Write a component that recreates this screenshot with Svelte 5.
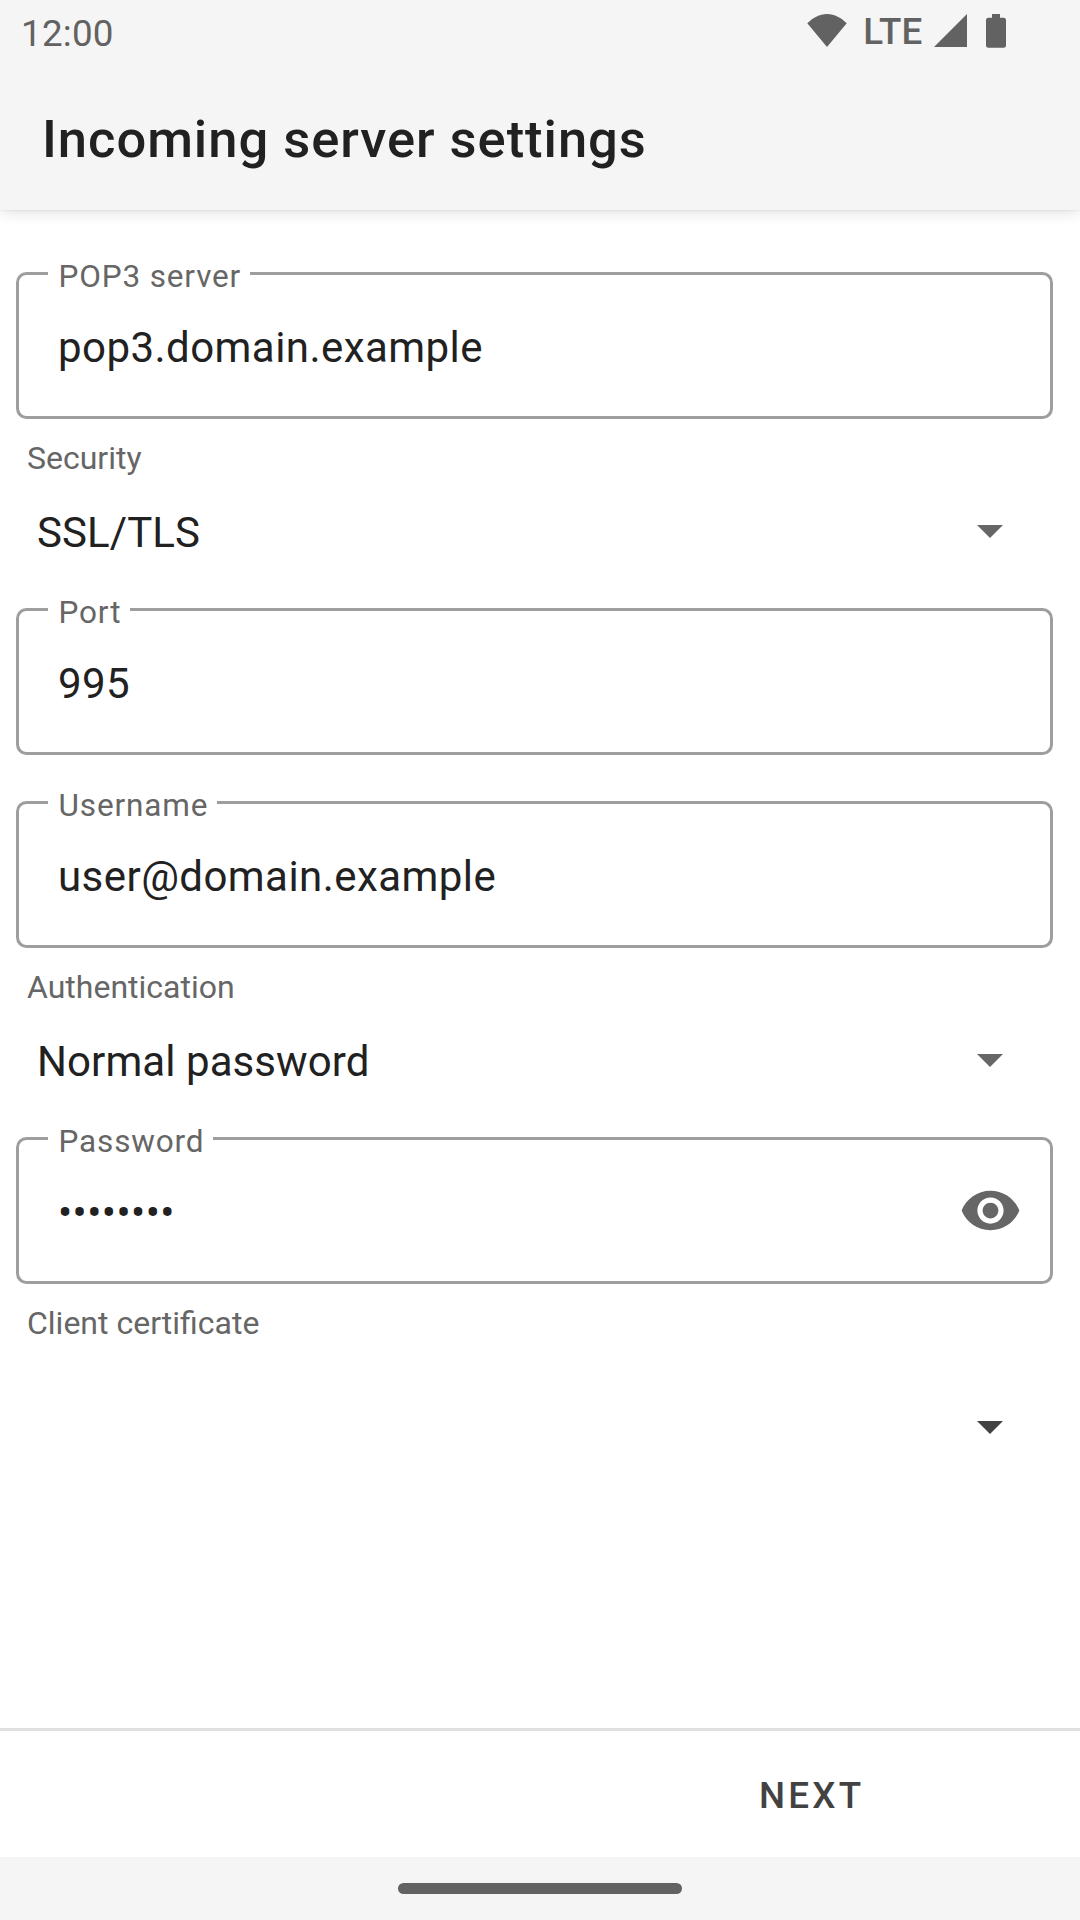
<script>
  const bullets = '•'.repeat(8);
</script>

{#snippet field(label, value, secret)}
  <fieldset class="field">
    <legend><span>{label}</span></legend>
    <div class="field-row">
      <span class="value">{value}</span>
      {#if secret}
        <svg class="eye" viewBox="0 0 24 24" aria-hidden="true">
          <path d="M12 4.5C7 4.5 2.73 7.61 1 12c1.73 4.39 6 7.5 11 7.5s9.27-3.11 11-7.5c-1.73-4.39-6-7.5-11-7.5zM12 17c-2.76 0-5-2.24-5-5s2.24-5 5-5 5 2.24 5 5-2.24 5-5 5zm0-8c-1.66 0-3 1.34-3 3s1.34 3 3 3 3-1.34 3-3-1.34-3-3-3z" />
        </svg>
      {/if}
    </div>
  </fieldset>
{/snippet}

{#snippet spinner(label, value, kind)}
  <div class="spinner {kind}">
    <div class="caption">{label}</div>
    <div class="choice">
      <span>{value}</span>
      <svg class="arrow" viewBox="0 0 26 13" aria-hidden="true"><path d="M0 0h26l-13 13z" /></svg>
    </div>
  </div>
{/snippet}

<div class="screen">
  <header>
    <div class="status">
      <span class="clock">12:00</span>
      <div class="indicators">
        <svg class="wifi" viewBox="0 0 40 33" aria-hidden="true"><path d="M20 33L.3 9.3C5.5 4 12.500 0 20 0s14.500 4 19.700 9.300z" /></svg>
        <span class="lte">LTE</span>
        <svg class="signal" viewBox="0 0 33 33" aria-hidden="true"><path d="M33 0v33H0z" /></svg>
        <svg class="battery" viewBox="0 0 20 34" aria-hidden="true"><path d="M6 0h8v3.700h3.500a2.500 2.500 0 0 1 2.500 2.500v25a2.500 2.500 0 0 1-2.500 2.500h-15a2.500 2.500 0 0 1-2.500-2.500v-25a2.500 2.500 0 0 1 2.500-2.500H6z" /></svg>
      </div>
    </div>
    <h1>Incoming server settings</h1>
  </header>

  <main>
    {@render field('POP3 server', 'pop3.domain.example', false)}
    {@render spinner('Security', 'SSL/TLS', '')}
    {@render field('Port', '995', false)}
    <div class="space"></div>
    {@render field('Username', 'user@domain.example', false)}
    {@render spinner('Authentication', 'Normal password', '')}
    {@render field('Password', bullets, true)}
    {@render spinner('Client certificate', '', 'certificate')}
  </main>

  <footer>
    <button>NEXT</button>
  </footer>
  <nav><div class="pill"></div></nav>
</div>

<style>
  :global(body) {
    margin: 0;
    background: #fff;
  }
  .screen {
    box-sizing: border-box;
    width: 1080px;
    height: 1920px;
    display: flex;
    flex-direction: column;
    overflow: hidden;
    background: #fff;
    font-family: Roboto, sans-serif;
    color: #212121;
  }
  svg {
    display: block;
    flex: none;
    fill: #666;
  }
  header {
    flex: none;
    height: 210px;
    background: #f5f5f5;
    box-shadow: 0 4px 14px -2px rgba(0, 0, 0, 0.13), 0 1px 2px rgba(0, 0, 0, 0.06);
  }
  .status {
    height: 63px;
    display: flex;
    justify-content: space-between;
    padding: 0 74px 0 21px;
    color: #626262;
    font-size: 36.75px;
    line-height: 44px;
  }
  .status svg {
    fill: #626262;
  }
  .clock {
    padding-top: 12px;
    letter-spacing: 0.25px;
  }
  .indicators {
    display: flex;
    align-items: flex-start;
  }
  .wifi {
    width: 40px;
    height: 33px;
    margin-top: 14px;
  }
  .lte {
    margin: 10px 11.5px 0 16px;
    font-weight: 500;
    letter-spacing: 0.2px;
  }
  .signal {
    width: 33px;
    height: 33px;
    margin-top: 14px;
  }
  .battery {
    width: 20px;
    height: 34px;
    margin: 14px 0 0 19px;
  }
  h1 {
    margin: 0;
    padding: 45px 42px 0;
    font-size: 52.5px;
    font-weight: 500;
    line-height: 62px;
    letter-spacing: 0.97px;
  }
  main {
    flex: 1;
    padding: 62px 27px 0 16px;
  }
  .field {
    box-sizing: border-box;
    min-width: 0;
    height: 165px;
    margin: -18px 0 0;
    padding: 0 28px 0 29px;
    border: 3px solid #9e9e9e;
    border-radius: 10.5px;
  }
  legend {
    box-sizing: border-box;
    height: 39px;
    padding: 3px 9px 0 10.5px;
    color: #666;
    font-size: 31.5px;
    line-height: 39px;
    letter-spacing: 0.85px;
  }
  .field-row {
    display: flex;
    justify-content: space-between;
    padding: 0 0 0 10px;
    height: 105px;
    align-items: center;
  }
  .value {
    padding-top: 4px;
    font-size: 42px;
    line-height: 50px;
    letter-spacing: 0.45px;
  }
  .eye {
    width: 63px;
    height: 63px;
  }
  .spinner {
    height: 189px;
  }
  .caption {
    padding: 21px 11px 0;
    color: #666;
    font-size: 32px;
    line-height: 37px;
  }
  .choice {
    display: flex;
    justify-content: space-between;
    align-items: center;
    height: 63px;
    margin-top: 24px;
    padding: 0 50px 0 21px;
    font-size: 42px;
    letter-spacing: 0.08px;
  }
  .arrow {
    width: 26px;
    height: 13px;
    margin-bottom: 2px;
  }
  .certificate .choice {
    margin-top: 55px;
  }
  .certificate .arrow {
    fill: #424242;
  }
  .space {
    height: 46px;
  }
  footer {
    flex: none;
    box-sizing: border-box;
    height: 129px;
    display: flex;
    justify-content: flex-end;
    align-items: center;
    padding-right: 215.5px;
    border-top: 3px solid #e0e0e0;
  }
  button {
    margin: 0;
    padding: 4px 0 0;
    border: 0;
    background: none;
    color: #424242;
    font: 500 36.75px/44px Roboto, sans-serif;
    letter-spacing: 0.0893em;
  }
  nav {
    flex: none;
    height: 63px;
    display: flex;
    justify-content: center;
    align-items: center;
    background: #f5f5f5;
  }
  .pill {
    width: 284px;
    height: 11px;
    border-radius: 5.5px;
    background: #626262;
  }
</style>
